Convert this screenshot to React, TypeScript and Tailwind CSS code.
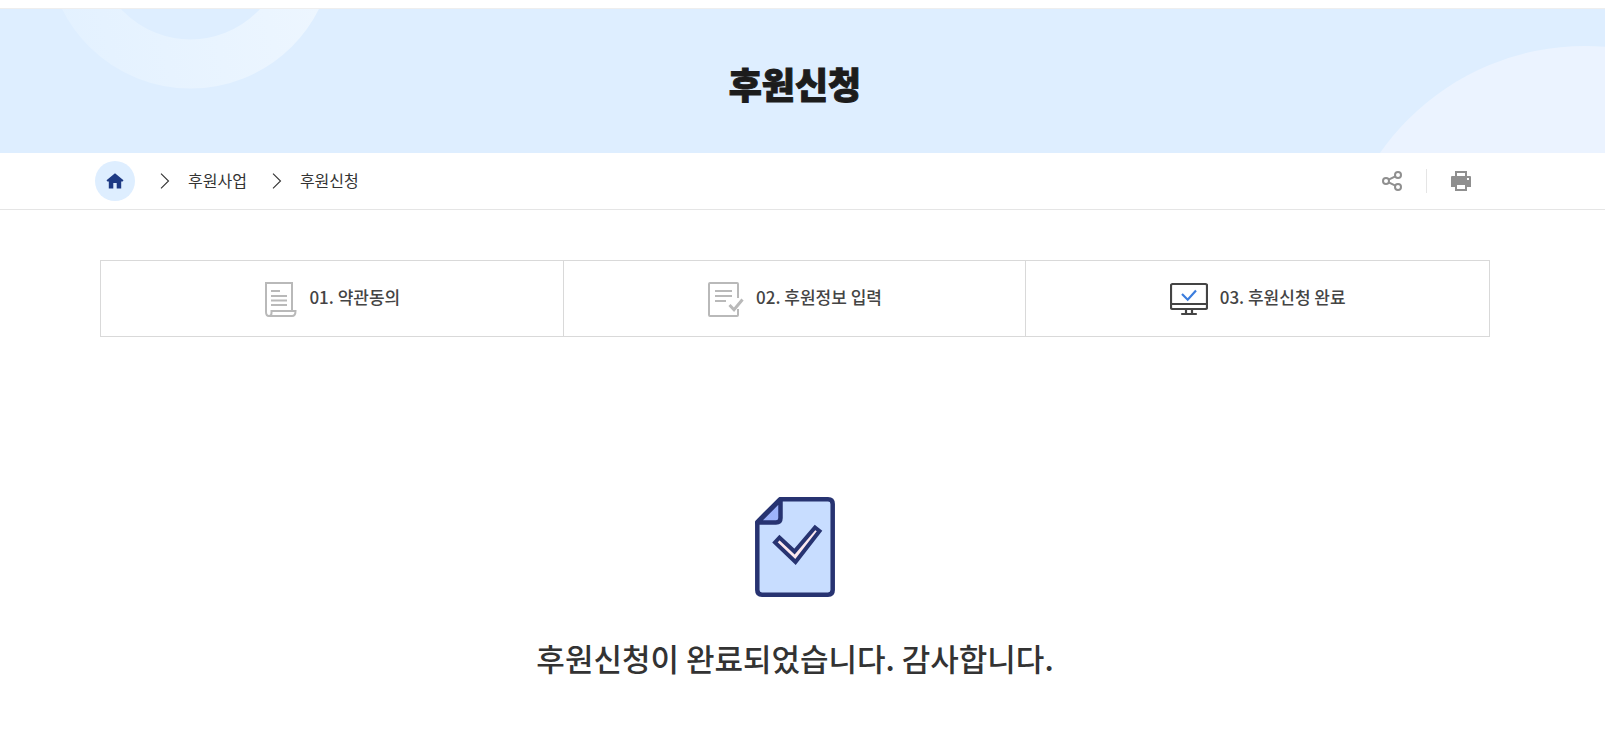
import type { ReactNode } from "react";

function HomeIcon() {
  return (
    <svg width="18" height="18" viewBox="0 0 18 18" fill="#1e3a84" aria-hidden="true">
      <path d="M9 1.2 17.500 8.2 16.600 9.5H15.200V16.500H10.700V11H7.300V16.500H2.800V9.500H1.400L.5 8.200Z" />
    </svg>
  );
}

function Chevron() {
  return (
    <svg width="10" height="16" viewBox="0 0 10 16" fill="none" stroke="#333" strokeWidth="1.1" aria-hidden="true">
      <path d="M1 .7 8.5 8 1 15.3" />
    </svg>
  );
}

function ShareIcon() {
  return (
    <svg width="20" height="20" viewBox="0 0 20 20" fill="none" stroke="#8f8f8f" strokeWidth="2" aria-hidden="true">
      <circle cx="4" cy="10" r="3" />
      <circle cx="16" cy="4" r="3" />
      <circle cx="16" cy="16" r="3" />
      <path d="M6.7 8.7 13.3 5.3M6.7 11.3 13.3 14.7" />
    </svg>
  );
}

function PrintIcon() {
  return (
    <svg width="20" height="20" viewBox="0 0 20 20" aria-hidden="true">
      <path
        fill="#8f8f8f"
        fillRule="evenodd"
        d="M4 0H16V5H19Q20 5 20 6V16H16V20H4V16H0V6Q0 5 1 5H4ZM6 2V5H14V2ZM6 14V18H14V14ZM16 7V9H18V7Z"
      />
    </svg>
  );
}

function TermsIcon() {
  return (
    <svg width="34" height="36" viewBox="0 0 34 36" fill="none" stroke="#b9b9b9" strokeWidth="2" aria-hidden="true">
      <path d="M29 29V2H3V31Q3 35 6 35H29Q32.500 35 32.500 30H8.500V32Q8.500 35 6 35" />
      <path d="M8 10H17M8 15H24M8 19.500H24M8 24H24" />
    </svg>
  );
}

function FormIcon() {
  return (
    <svg width="37" height="36" viewBox="0 0 37 36" fill="none" stroke="#b9b9b9" strokeWidth="2" aria-hidden="true">
      <path d="M31 17V3Q31 2 30 2H3Q2 2 2 3V34Q2 35 3 35H30Q31 35 31 34V28" />
      <path d="M8 10H25M8 15H25M8 20H19" />
      <path d="M22.500 24 27 28.700 35.500 18.500" strokeWidth="3" />
    </svg>
  );
}

function MonitorIcon() {
  return (
    <svg width="38" height="34" viewBox="0 0 38 34" fill="none" stroke="#444" strokeWidth="2.2" aria-hidden="true">
      <rect x="1" y="2" width="36" height="25" rx="1.500" />
      <path d="M1 22H37M16 27V32M22 27V32" />
      <path d="M12 32H26" strokeLinecap="round" />
      <path d="M12 12 17.700 17.700 26 8.500" stroke="#3b7ddd" />
    </svg>
  );
}

function CompleteIcon() {
  return (
    <svg width="80" height="100" viewBox="0 0 80 100" stroke="#273371" strokeWidth="4.500" strokeLinejoin="round" aria-hidden="true">
      <path d="M25 2.300H73Q77.700 2.300 77.700 7V93Q77.700 97.700 73 97.700H7Q2.300 97.700 2.300 93V25Z" fill="#c8ddff" />
      <path d="M25.500 2.500V21Q25.500 25.500 21 25.500H2.500Z" fill="#9db3fb" />
      <path d="M24.500 40.500 20 45.500 40.500 65 64.500 34 60 30.500 39.500 54.500Z" fill="#fde8ee" strokeWidth="4" strokeLinejoin="miter" />
    </svg>
  );
}

const steps: { label: string; icon: ReactNode; current?: boolean }[] = [
  { label: "01. 약관동의", icon: <TermsIcon /> },
  { label: "02. 후원정보 입력", icon: <FormIcon /> },
  { label: "03. 후원신청 완료", icon: <MonitorIcon />, current: true },
];

export default function App() {
  return (
    <div className="min-h-screen bg-white pt-2 font-['Noto_Sans_CJK_KR',sans-serif] text-[#333]">
      <header className="relative flex h-[145px] items-center justify-center overflow-hidden border-t border-[#eeeeee] bg-[#deeeff] pt-1 pr-[15px]">
        <svg className="absolute top-0 left-0" width="340" height="144" viewBox="0 0 340 144" aria-hidden="true">
          <defs>
            <linearGradient id="ring" gradientUnits="userSpaceOnUse" x1="60" x2="320" y1="60" y2="0">
              <stop offset="0" stopColor="#e3f1ff" />
              <stop offset="1" stopColor="#edf6ff" />
            </linearGradient>
          </defs>
          <circle cx="190.500" cy="-64" r="119" fill="none" stroke="url(#ring)" strokeWidth="49" />
        </svg>
        <svg className="absolute top-0 right-0" width="240" height="144" viewBox="0 0 240 144" aria-hidden="true">
          <circle cx="220" cy="287" r="250" fill="#ebf3ff" />
        </svg>
        <h1 className="relative text-4xl font-black text-[#1c1c1c] [-webkit-text-stroke:1px_#1c1c1c]">후원신청</h1>
      </header>

      <div className="border-b border-[#e5e5e5] pr-[15px]">
        <div className="mx-auto flex h-14 max-w-[1400px] items-center justify-between">
          <nav aria-label="현재 위치">
            <ol className="flex items-center text-base">
              <li>
                <a href="#" aria-label="홈" className="flex size-10 items-center justify-center rounded-full bg-[#deeeff]">
                  <HomeIcon />
                </a>
              </li>
              <li className="ml-[25px] flex items-center gap-[18px]">
                <Chevron />
                <a href="#" className="pb-0.5">후원사업</a>
              </li>
              <li className="ml-[25px] flex items-center gap-[18px]">
                <Chevron />
                <a href="#" aria-current="page" className="pb-0.5">후원신청</a>
              </li>
            </ol>
          </nav>
          <div className="flex items-center pr-6">
            <button type="button" aria-label="공유하기">
              <ShareIcon />
            </button>
            <div className="mx-6 h-6 w-px bg-[#e5e5e5]" />
            <button type="button" aria-label="인쇄하기">
              <PrintIcon />
            </button>
          </div>
        </div>
      </div>

      <main className="pr-[15px]">
        <ol className="mx-auto mt-[50px] grid max-w-[1390px] grid-cols-3 divide-x divide-[#d9d9d9] border border-[#d9d9d9]">
          {steps.map((step) => (
            <li
              key={step.label}
              aria-current={step.current ? "step" : undefined}
              className="flex h-[75px] items-center justify-center gap-3 text-[17px] font-medium text-[#444]"
            >
              {step.icon}
              <span className="pb-[3px]">{step.label}</span>
            </li>
          ))}
        </ol>

        <section className="flex flex-col items-center pt-40">
          <CompleteIcon />
          <p className="mt-10 text-[31px] leading-[42px] font-medium">후원신청이 완료되었습니다. 감사합니다.</p>
        </section>
      </main>
    </div>
  );
}
